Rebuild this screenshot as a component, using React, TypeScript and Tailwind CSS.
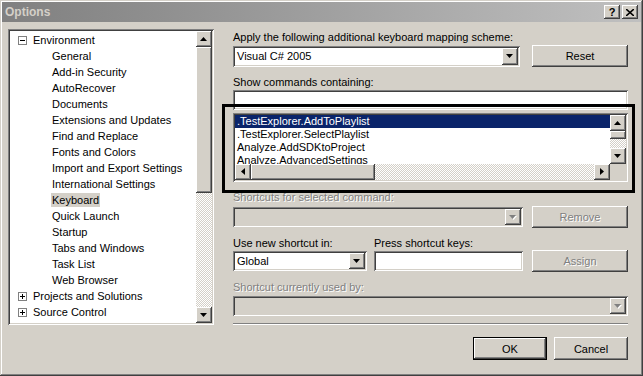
import React from "react";

const raised =
  "bg-[#d4d0c8] shadow-[inset_-1px_-1px_#404040,inset_1px_1px_#ffffff,inset_-2px_-2px_#808080,inset_2px_2px_#d4d0c8]";
const sunken =
  "shadow-[inset_1px_1px_#808080,inset_-1px_-1px_#ffffff,inset_2px_2px_#404040,inset_-2px_-2px_#d4d0c8]";
const checker =
  "[background:repeating-conic-gradient(#ffffff_0_25%,#d4d0c8_0_50%)_0_0/2px_2px]";
const disabledText = "text-[#808080] [text-shadow:1px_1px_0_#ffffff]";

const treeItems = [
  { label: "Environment", level: 0, box: "-" },
  { label: "General", level: 1 },
  { label: "Add-in Security", level: 1 },
  { label: "AutoRecover", level: 1 },
  { label: "Documents", level: 1 },
  { label: "Extensions and Updates", level: 1 },
  { label: "Find and Replace", level: 1 },
  { label: "Fonts and Colors", level: 1 },
  { label: "Import and Export Settings", level: 1 },
  { label: "International Settings", level: 1 },
  { label: "Keyboard", level: 1, selected: true },
  { label: "Quick Launch", level: 1 },
  { label: "Startup", level: 1 },
  { label: "Tabs and Windows", level: 1 },
  { label: "Task List", level: 1 },
  { label: "Web Browser", level: 1 },
  { label: "Projects and Solutions", level: 0, box: "+" },
  { label: "Source Control", level: 0, box: "+" },
  { label: "Text Editor", level: 0, box: "+" },
];

const commands = [
  ".TestExplorer.AddToPlaylist",
  ".TestExplorer.SelectPlaylist",
  "Analyze.AddSDKtoProject",
  "Analyze.AdvancedSettings",
];

function Arrow({ dir, gray }: { dir: "up" | "down" | "left" | "right"; gray?: boolean }) {
  const fill = gray ? "#808080" : "#000000";
  const vertical = dir === "up" || dir === "down";
  const points = {
    up: "3.5,0 7,4 0,4",
    down: "0,0 7,0 3.5,4",
    left: "4,0 4,7 0,3.5",
    right: "0,0 4,3.5 0,7",
  }[dir];
  return (
    <svg width={vertical ? 8 : 5} height={vertical ? 5 : 8} className="block">
      {gray && (
        <polygon points={points} fill="#ffffff" transform="translate(1,1)" />
      )}
      <polygon points={points} fill={fill} />
    </svg>
  );
}

function ScrollBtn({ dir, gray }: { dir: "up" | "down" | "left" | "right"; gray?: boolean }) {
  return (
    <div className={`flex h-[16px] w-[16px] shrink-0 items-center justify-center ${raised}`}>
      <Arrow dir={dir} gray={gray} />
    </div>
  );
}

function Combo({
  value,
  disabled,
  className,
}: {
  value?: string;
  disabled?: boolean;
  className: string;
}) {
  return (
    <div
      className={`flex h-[20px] items-stretch p-[2px] ${sunken} ${disabled ? "bg-[#d4d0c8]" : "bg-white"} ${className}`}
    >
      <span className="flex-1 pl-[2px] leading-[16px]">{value}</span>
      <div className={`flex w-[16px] items-center justify-center ${raised}`}>
        <Arrow dir="down" gray={disabled} />
      </div>
    </div>
  );
}

function Button({
  label,
  disabled,
  isDefault,
  className,
}: {
  label: string;
  disabled?: boolean;
  isDefault?: boolean;
  className: string;
}) {
  return (
    <div
      className={`flex items-center justify-center ${raised} ${isDefault ? "border border-black" : ""} ${disabled ? disabledText : "text-black"} ${className}`}
    >
      {label}
    </div>
  );
}

function Tree() {
  return (
    <div className={`flex h-[296px] w-[206px] shrink-0 bg-white p-[2px] ${sunken}`}>
      <div className="flex-1 overflow-hidden pt-[1px]">
        {treeItems.map((item) => (
          <div key={item.label} className="flex h-[16px] items-center">
            {item.box ? (
              <>
                <div className="ml-[8px] flex h-[9px] w-[9px] items-center justify-center border border-[#808080] bg-white">
                  <svg width="5" height="5" className="block">
                    <rect x="0" y="2" width="5" height="1" fill="#000" />
                    {item.box === "+" && <rect x="2" y="0" width="1" height="5" fill="#000" />}
                  </svg>
                </div>
                <span className="ml-[6px] whitespace-nowrap">{item.label}</span>
              </>
            ) : (
              <span
                className={`ml-[41px] whitespace-nowrap px-[1px] leading-[14px] ${item.selected ? "bg-[#d4d0c8]" : ""}`}
              >
                {item.label}
              </span>
            )}
          </div>
        ))}
      </div>
      <div className="flex w-[16px] flex-col">
        <ScrollBtn dir="up" />
        <div className={`h-[146px] ${raised}`} />
        <div className={`flex-1 ${checker}`} />
        <ScrollBtn dir="down" />
      </div>
    </div>
  );
}

function CommandList() {
  return (
    <div className={`mt-[3px] flex h-[69px] flex-col bg-white p-[2px] ${sunken}`}>
      <div className="flex h-[49px]">
        <div className="flex-1 overflow-hidden">
          {commands.map((c, i) => (
            <div
              key={c}
              className={`h-[13px] whitespace-nowrap pl-[2px] text-[11px] leading-[13px] ${i === 0 ? "bg-[#0a246a] text-white" : "text-black"}`}
            >
              {c}
            </div>
          ))}
        </div>
        <div className="flex w-[16px] flex-col">
          <ScrollBtn dir="up" />
          <div className={`h-[8px] ${raised}`} />
          <div className={`flex-1 ${checker}`} />
          <ScrollBtn dir="down" />
        </div>
      </div>
      <div className="flex h-[16px]">
        <ScrollBtn dir="left" />
        <div className={`w-[124px] ${raised}`} />
        <div className={`flex-1 ${checker}`} />
        <ScrollBtn dir="right" />
        <div className="w-[16px] bg-[#d4d0c8]" />
      </div>
    </div>
  );
}

export default function App() {
  return (
    <div className="relative h-[376px] w-[643px] overflow-hidden bg-[#d4d0c8] p-[2px] font-['Liberation_Sans',Arial,sans-serif] text-[11px] text-black shadow-[inset_-1px_-1px_#404040,inset_1px_1px_#d4d0c8,inset_-2px_-2px_#808080,inset_2px_2px_#ffffff]">
      <div className="flex h-[20px] items-center bg-gradient-to-r from-[#808080] to-[#c0c0c0] pl-[3px] pr-[3px]">
        <span className="flex-1 text-[12px] font-bold text-[#d4d0c8]">Options</span>
        <div className={`flex h-[14px] w-[16px] items-center justify-center text-[11px] font-bold leading-none ${raised}`}>
          ?
        </div>
        <div className={`ml-[2px] flex h-[14px] w-[16px] items-center justify-center ${raised}`}>
          <svg width="8" height="7" className="block">
            <path d="M0 0 L8 7 M8 0 L0 7" stroke="#000" strokeWidth="1.6" />
          </svg>
        </div>
      </div>

      <div className="flex pl-[6px] pt-[7px]">
        <Tree />

        <div className="ml-[19px] mt-[1px] flex w-[395px] flex-col leading-[14px]">
          <div>Apply the following additional keyboard mapping scheme:</div>
          <div className="mt-[1px] flex h-[22px] items-start justify-between">
            <Combo value="Visual C# 2005" className="mt-[1px] w-[287px] h-[21px]" />
            <Button label="Reset" className="h-[22px] w-[96px]" />
          </div>

          <div className="mt-[8px]">Show commands containing:</div>
          <div className={`mt-[1px] h-[20px] bg-white ${sunken}`} />

          <CommandList />

          <div className={`mt-[8px] ${disabledText}`}>Shortcuts for selected command:</div>
          <div className="mt-[2px] flex h-[22px] items-start justify-between">
            <Combo disabled className="mt-[1px] w-[290px]" />
            <Button label="Remove" disabled className="h-[22px] w-[96px]" />
          </div>

          <div className="mt-[8px] flex">
            <span className="w-[141px]">Use new shortcut in:</span>
            <span>Press shortcut keys:</span>
          </div>
          <div className="flex h-[22px] items-start">
            <Combo value="Global" className="mt-[1px] w-[134px]" />
            <div className={`ml-[7px] mt-[1px] h-[20px] w-[149px] bg-white ${sunken}`} />
            <Button label="Assign" disabled className="ml-auto h-[22px] w-[96px]" />
          </div>

          <div className={`mt-[8px] ${disabledText}`}>Shortcut currently used by:</div>
          <Combo disabled className="mt-[2px] w-[395px]" />

          <div className="mt-[7px] h-[2px] border-t border-b border-t-[#808080] border-b-white" />

          <div className="mt-[12px] flex justify-end gap-[7px]">
            <Button label="OK" isDefault className="h-[23px] w-[74px]" />
            <Button label="Cancel" className="h-[23px] w-[74px]" />
          </div>
        </div>
      </div>

      <div className="pointer-events-none absolute left-[222px] top-[104px] h-[89px] w-[413px] border-[3px] border-black" />
    </div>
  );
}
